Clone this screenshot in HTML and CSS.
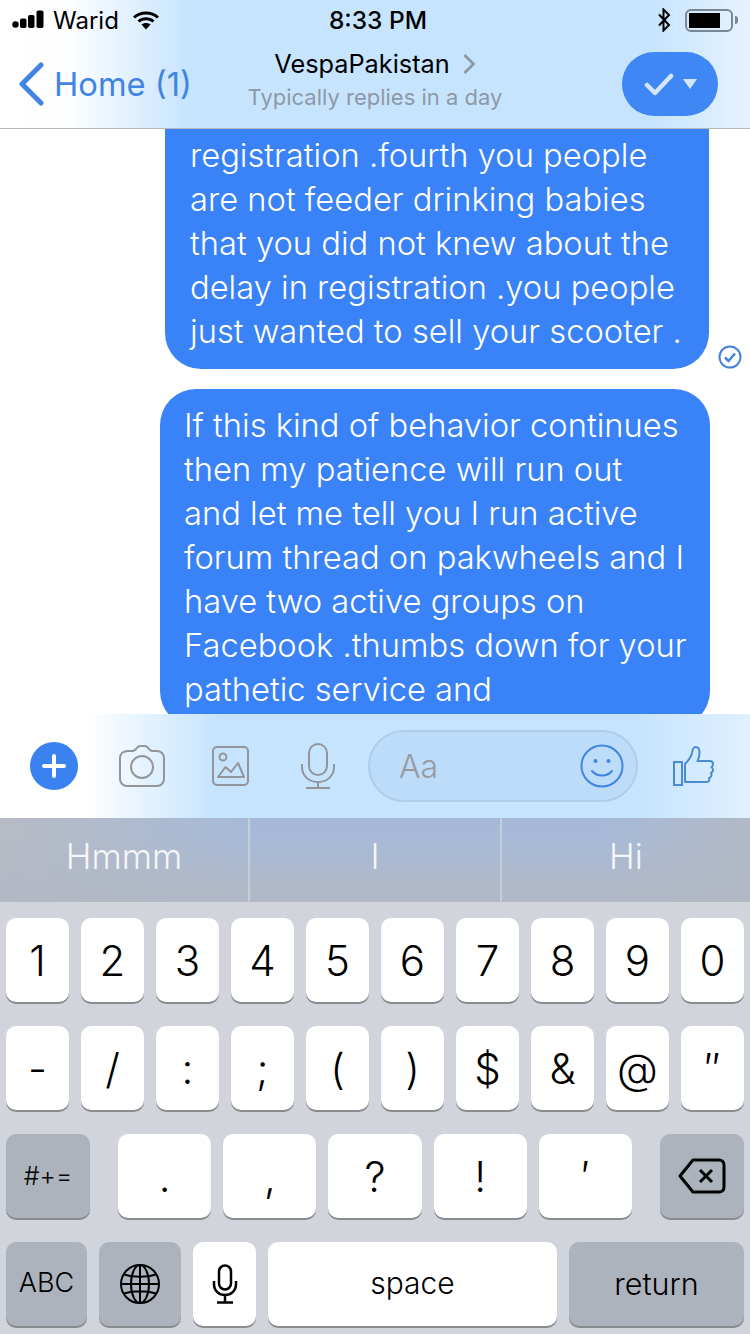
FILE: index.html
```html
<!DOCTYPE html>
<html lang="en">
<head>
    <meta charset="UTF-8">
    <meta name="viewport" content="width=device-width, initial-scale=1.0">
    <title>VespaPakistan</title>
    <link rel="stylesheet" href="styles.css">
</head>
<body>
    <div class="phone">
        <header class="top-bar">
            <div class="status-bar">
                <div class="status-left">
                    <svg class="signal" width="36" height="20" viewBox="0 0 36 20"><circle cx="3.500" cy="14.500" r="3.200" fill="#000"/><rect x="8" y="8.500" width="6.500" height="9.500" rx="1.800" fill="#000"/><rect x="16" y="5" width="6.500" height="13" rx="1.800" fill="#000"/><rect x="24.500" y="0.500" width="7" height="17.500" rx="1.800" fill="#000"/></svg>
                    <span class="carrier">Warid</span>
                    <svg class="wifi" width="30" height="20" viewBox="0 0 30 20"><path d="M3 7.500c6.800-6 17.200-6 24 0" fill="none" stroke="#000" stroke-width="3"/><path d="M7.500 11.500c4.300-3.800 10.700-3.800 15 0" fill="none" stroke="#000" stroke-width="3"/><path d="M10.500 14.500c2.500-2 6.500-2 9 0L15 19.500z" fill="#000"/></svg>
                </div>
                <div class="clock">8:33 PM</div>
                <div class="status-right">
                    <svg class="bluetooth" width="14" height="24" viewBox="0 0 14 24"><path d="M2 6.500l10 10.500-5.500 5.500V1.500L12 7 2 17.500" fill="none" stroke="#000" stroke-width="2"/></svg>
                    <div class="battery"><div class="battery-level"></div></div>
                    <div class="battery-tip"></div>
                </div>
            </div>
            <nav class="nav-bar">
                <div class="back">
                    <svg width="26" height="44" viewBox="0 0 26 44"><path d="M23 3L4 22l19 19" fill="none" stroke="#4084e4" stroke-width="5" stroke-linecap="round" stroke-linejoin="round"/></svg>
                    <span>Home (1)</span>
                </div>
                <div class="title-block">
                    <div class="title">VespaPakistan
                        <svg width="14" height="22" viewBox="0 0 14 22"><path d="M2.500 2l9 9-9 9" fill="none" stroke="#8d99a5" stroke-width="2.800"/></svg>
                    </div>
                    <div class="subtitle">Typically replies in a day</div>
                </div>
                <div class="done-btn">
                    <svg width="30" height="24" viewBox="0 0 30 24"><path d="M3 13l8 8L27 4" fill="none" stroke="#d5e6fc" stroke-width="4.500" stroke-linecap="round" stroke-linejoin="round"/></svg>
                    <svg width="14" height="10" viewBox="0 0 14 10"><path d="M0 0h14L7 10z" fill="#d5e6fc"/></svg>
                </div>
            </nav>
        </header>

        <main class="chat">
            <div class="msg-row">
                <div class="bubble bubble-first">registration .fourth you people<br>are not feeder drinking babies<br>that you did not knew about the<br>delay in registration .you people<br>just wanted to sell your scooter .</div>
                <svg class="receipt" width="24" height="24" viewBox="0 0 24 24"><circle cx="12" cy="12" r="10.500" fill="none" stroke="#4383dc" stroke-width="2"/><path d="M7 12.500l3.500 3.500L17 8.500" fill="none" stroke="#4383dc" stroke-width="2.500"/></svg>
            </div>
            <div class="msg-row msg-row-plain">
                <div class="bubble bubble-second">If this kind of behavior continues<br>then my patience will run out<br>and let me tell you I run active<br>forum thread on pakwheels and I<br>have two active groups on<br>Facebook .thumbs down for your<br>pathetic service and</div>
            </div>
        </main>

        <section class="composer">
            <div class="plus-btn">
                <svg width="26" height="26" viewBox="0 0 26 26"><path d="M13 3v20M3 13h20" stroke="#fff" stroke-width="4" stroke-linecap="round"/></svg>
            </div>
            <svg class="icon-camera" width="46" height="42" viewBox="0 0 46 42"><path d="M9 6h4.500c1.500 0 2.500-.8 3.500-2 1-1.500 2-3 4-3h5c2 0 3 1.500 4 3 1 1.200 2 2 3.500 2H38c4 0 7 3 7 7v21c0 4-3 7-7 7H8c-4 0-7-3-7-7V13c0-4 3-7 8-7z" fill="none" stroke="#929599" stroke-width="2"/><circle cx="23" cy="22" r="11" fill="none" stroke="#929599" stroke-width="2"/></svg>
            <svg class="icon-photo" width="37" height="40" viewBox="0 0 37 40"><rect x="1" y="1" width="35" height="38" rx="4" fill="none" stroke="#929599" stroke-width="2"/><circle cx="11" cy="11" r="3.500" fill="none" stroke="#929599" stroke-width="2"/><path d="M6 31l7.500-10 5.500 5 7-9 6 14z" fill="none" stroke="#929599" stroke-width="2" stroke-linejoin="round"/></svg>
            <svg class="icon-mic" width="34" height="46" viewBox="0 0 34 46"><rect x="8" y="1" width="18" height="31" rx="9" fill="none" stroke="#929599" stroke-width="2"/><path d="M1 21v3c0 9 7 15 16 15s16-6 16-15v-3M17 39v6M5 45h24" fill="none" stroke="#929599" stroke-width="2"/></svg>
            <div class="text-field">
                <span class="placeholder">Aa</span>
                <svg width="44" height="44" viewBox="0 0 44 44"><circle cx="22" cy="22" r="20.500" fill="none" stroke="#4084e4" stroke-width="2"/><circle cx="15.500" cy="17" r="2" fill="#4084e4"/><circle cx="28.500" cy="17" r="2" fill="#4084e4"/><path d="M12 27c5 6 15 6 20 0" fill="none" stroke="#4084e4" stroke-width="2" stroke-linecap="round"/></svg>
            </div>
            <svg class="icon-like" width="42" height="42" viewBox="0 0 42 42"><rect x="1" y="17" width="8" height="23" fill="none" stroke="#4a8bd6" stroke-width="2"/><path d="M12 37V19c3-3 6-7 7-11 .5-3 1-6 3.500-6 3 0 4 3 4 6 0 3-1 6-2 8h12c2.500 0 3.500 1.500 3.500 3 0 1.500-.7 2.500-1.500 3 1 .8 1.500 1.700 1.500 3 0 1.500-1 2.500-2 3 .5 1 .8 2 .3 3-.3 1-1 1.700-2.300 2 .5 1 .5 1.500.2 2.500-.5 1-1.500 1.500-3 1.500H14c-1 0-2-.5-2-1.500z" fill="none" stroke="#4a8bd6" stroke-width="2" stroke-linejoin="round"/></svg>
        </section>

        <section class="suggestions">
            <div class="suggestion">Hmmm</div>
            <div class="suggestion">I</div>
            <div class="suggestion">Hi</div>
        </section>

        <section class="keyboard">
            <div class="key-row">
                <div class="key">1</div>
                <div class="key">2</div>
                <div class="key">3</div>
                <div class="key">4</div>
                <div class="key">5</div>
                <div class="key">6</div>
                <div class="key">7</div>
                <div class="key">8</div>
                <div class="key">9</div>
                <div class="key">0</div>
            </div>
            <div class="key-row">
                <div class="key">-</div>
                <div class="key">/</div>
                <div class="key">:</div>
                <div class="key">;</div>
                <div class="key">(</div>
                <div class="key">)</div>
                <div class="key">$</div>
                <div class="key">&amp;</div>
                <div class="key">@</div>
                <div class="key">″</div>
            </div>
            <div class="key-row">
                <div class="key key-dark key-side key-small">#+=</div>
                <div class="punct-group">
                    <div class="key key-low">.</div>
                    <div class="key key-low">,</div>
                    <div class="key">?</div>
                    <div class="key">!</div>
                    <div class="key">′</div>
                </div>
                <div class="key key-dark key-side">
                    <svg width="48" height="36" viewBox="0 0 48 36"><path d="M15 2h26c3 0 5 2 5 5v22c0 3-2 5-5 5H15L2 18z" fill="none" stroke="#000" stroke-width="3" stroke-linejoin="round"/><path d="M22 12l12 12M34 12L22 24" stroke="#000" stroke-width="3"/></svg>
                </div>
            </div>
            <div class="key-row">
                <div class="key key-dark key-abc">ABC</div>
                <div class="key key-dark key-globe">
                    <svg width="40" height="40" viewBox="0 0 40 40"><g fill="none" stroke="#000" stroke-width="2"><circle cx="20" cy="20" r="19"/><ellipse cx="20" cy="20" rx="9" ry="19"/><path d="M20 1v38M1 20h38M4 10.500c9 3 23 3 32 0M4 29.500c9-3 23-3 32 0"/></g></svg>
                </div>
                <div class="key key-mic">
                    <svg width="26" height="40" viewBox="0 0 26 40"><rect x="7" y="1.500" width="12" height="24" rx="6" fill="none" stroke="#000" stroke-width="2.500"/><path d="M2 17v3c0 7 5 11 11 11s11-4 11-11v-3M13 31v7M5 38.500h16" fill="none" stroke="#000" stroke-width="2.500"/></svg>
                </div>
                <div class="key key-space">space</div>
                <div class="key key-dark key-return">return</div>
            </div>
        </section>
    </div>
</body>
</html>
```

FILE: styles.css
```css
* {
    box-sizing: border-box;
}
html, body {
    margin: 0;
    padding: 0;
}
body {
    font-family: Inter, "Liberation Sans", sans-serif;
    background-color: #fff;
}
.phone {
    width: 750px;
    height: 1334px;
    display: flex;
    flex-direction: column;
    overflow: hidden;
}

/* status bar and nav */
.top-bar {
    height: 129px;
    flex: none;
    background: linear-gradient(90deg, #fff 0, #fdfeff 70px, #c6e4fe 190px, #c6e4fe 650px, #e6f3ff 750px);
    border-bottom: 1px solid #b4b8bb;
}
.status-bar {
    height: 40px;
    display: flex;
    align-items: center;
    justify-content: space-between;
    padding: 0 12px;
}
.status-left {
    display: flex;
    align-items: center;
    width: 240px;
}
.carrier {
    font-size: 24px;
    margin-left: 5px;
}
.wifi {
    margin-left: 12px;
}
.clock {
    font-size: 24.500px;
    font-weight: 500;
    margin-left: 6px;
}
.status-right {
    display: flex;
    align-items: center;
    justify-content: flex-end;
    width: 240px;
}
.bluetooth {
    margin-right: 14px;
}
.battery {
    width: 48px;
    height: 23px;
    border: 2px solid #7b8793;
    border-radius: 6px;
    padding: 2px;
}
.battery-level {
    width: 31px;
    height: 100%;
    background-color: #000;
}
.battery-tip {
    width: 3px;
    height: 8px;
    margin-left: 2px;
    background-color: #7b8793;
    border-radius: 0 3px 3px 0;
}
.nav-bar {
    height: 88px;
    display: grid;
    grid-template-columns: 1fr auto 1fr;
    align-items: center;
    padding: 0 32px;
}
.back {
    margin-left: -14px;
    display: flex;
    align-items: center;
    gap: 10px;
    color: #4084e4;
    font-size: 32.700px;
}
.title-block {
    text-align: center;
    margin-top: -11px;
}
.title {
    font-size: 25.300px;
    color: #000;
    display: flex;
    align-items: center;
    justify-content: center;
    gap: 12px;
    height: 32px;
}
.subtitle {
    font-size: 22px;
    color: #8d99a5;
    margin-top: 4px;
}
.done-btn {
    justify-self: end;
    width: 96px;
    height: 64px;
    border-radius: 32px;
    background-color: #3f87f5;
    display: flex;
    align-items: center;
    justify-content: center;
    gap: 9px;
}

/* messages */
.chat {
    flex: 1;
    min-height: 0;
    overflow: hidden;
    background-color: #fff;
}
.msg-row {
    display: flex;
    justify-content: flex-end;
    align-items: flex-end;
    gap: 9px;
    padding-right: 8px;
    margin-bottom: 20px;
}
.msg-row-plain {
    padding-right: 40px;
}
.bubble {
    background-color: #3a82f7;
    color: #fff;
    font-size: 32.700px;
    line-height: 44px;
    font-weight: 300;
    white-space: nowrap;
    padding: 14px 0 16px 25px;
    border-radius: 36px;
}
/* scrolled under the nav, so the rounded top stays out of view */
.bubble-first {
    width: 544px;
    margin-top: -54px;
    padding-top: 58px;
}
.bubble-second {
    width: 550px;
    padding-left: 24px;
}
.receipt {
    flex: none;
}

/* composer */
.composer {
    height: 104px;
    flex: none;
    display: flex;
    align-items: center;
    padding-left: 30px;
    background: linear-gradient(90deg, #fff 0, #fff 85px, #c6e4fe 215px, #c6e4fe 640px, #e0f0ff 750px);
}
.plus-btn {
    width: 48px;
    height: 48px;
    border-radius: 50%;
    background-color: #3a82f0;
    display: flex;
    align-items: center;
    justify-content: center;
}
.icon-camera {
    margin-left: 41px;
}
.icon-photo {
    margin-left: 47px;
}
.icon-mic {
    margin-left: 52px;
}
.text-field {
    width: 270px;
    height: 72px;
    margin-left: 33px;
    border-radius: 36px;
    border: 2px solid #afcde9;
    background-color: #bcdcfa;
    display: flex;
    align-items: center;
    justify-content: space-between;
    padding: 0 12px 0 29px;
}
.placeholder {
    font-size: 32px;
    font-weight: 300;
    color: #979a9e;
}
.icon-like {
    margin-left: 35px;
}

/* predictive bar */
.suggestions {
    height: 84px;
    flex: none;
    display: grid;
    grid-template-columns: 250px 252px 248px;
    background: linear-gradient(180deg, rgba(178, 184, 196, 0) 20%, #b2b8c4 100%), linear-gradient(90deg, #b7bbc4 0, #a6bad8 250px, #a6bad8 600px, #b2b9c6 750px);
}
.suggestion {
    display: flex;
    align-items: center;
    justify-content: center;
    padding-bottom: 8px;
    color: #f5f6f8;
    font-size: 34.700px;
    font-weight: 300;
}
.suggestion:not(:last-child) {
    border-right: 2px solid #c6ced9;
}

/* keyboard */
.keyboard {
    height: 432px;
    flex: none;
    background-color: #d1d5db;
    padding: 16px 6px 0;
    display: flex;
    flex-direction: column;
    gap: 24px;
}
.key-row {
    display: flex;
    justify-content: space-between;
    gap: 12px;
}
.key {
    flex: 1;
    height: 84px;
    background-color: #fff;
    border-radius: 10px;
    box-shadow: 0 2px 0 #898b8f;
    display: flex;
    align-items: center;
    justify-content: center;
    color: #000;
    font-size: 42px;
    font-weight: 300;
}
.key-dark {
    background-color: #adb3bd;
}
.key-side {
    flex: none;
    width: 84px;
}
.key-small {
    font-size: 25px;
    font-weight: 300;
}
.punct-group {
    display: flex;
    gap: 12px;
    flex: 1;
    margin: 0 16px;
}
.key-low {
    align-items: flex-end;
    padding-bottom: 16px;
}
.key-abc {
    flex: none;
    width: 81px;
    padding-bottom: 3px;
    font-size: 27px;
    font-weight: 300;
}
.key-globe {
    flex: none;
    width: 82px;
}
.key-mic {
    flex: none;
    width: 63px;
}
.key-space {
    flex: none;
    width: 289px;
    padding-bottom: 2px;
    font-size: 30px;
    font-weight: 300;
}
.key-return {
    flex: none;
    width: 175px;
    padding-bottom: 2px;
    font-size: 30.500px;
    font-weight: 300;
}
```
